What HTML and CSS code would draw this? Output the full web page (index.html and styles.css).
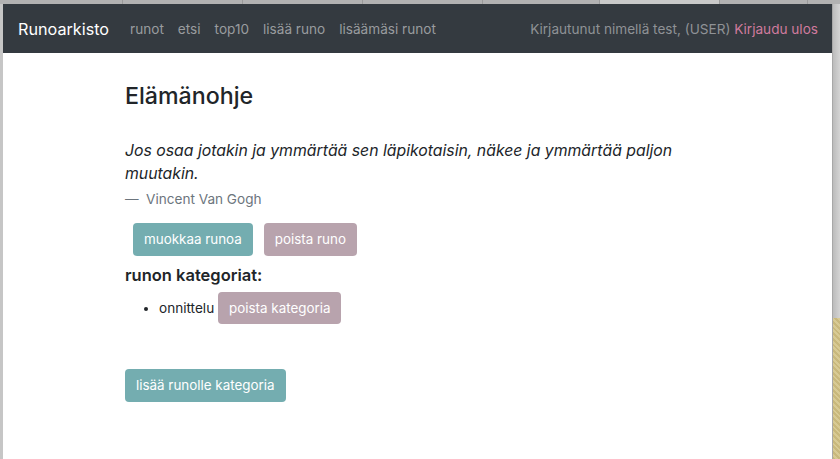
FILE: index.html
```html
<!DOCTYPE html>
<html lang="fi">
<head>
<meta charset="utf-8">
<title>Runoarkisto</title>
<link rel="stylesheet" href="styles.css">
</head>
<body>
<div class="tabs">
  <div class="tab t1"></div><div class="tab t2"></div><div class="tab t3"></div><div class="tab t4"></div><div class="tab t5"></div><div class="tab t6 active"></div><div class="tab t7"></div><div class="tab t8"></div>
</div>
<div class="window">
  <div class="edge-left"></div>
  <div class="page">
    <nav class="navbar">
      <a class="brand" href="#">Runoarkisto</a>
      <ul class="nav-links">
        <li><a href="#">runot</a></li>
        <li><a href="#">etsi</a></li>
        <li><a href="#">top10</a></li>
        <li><a href="#">lisää runo</a></li>
        <li><a href="#">lisäämäsi runot</a></li>
      </ul>
      <div class="user">Kirjautunut nimellä test, (USER) <a class="logout" href="#">Kirjaudu ulos</a></div>
    </nav>
    <main class="content">
      <h3 class="title">Elämänohje</h3>
      <blockquote class="quote">
        <p class="quote-text">Jos osaa jotakin ja ymmärtää sen läpikotaisin, näkee ja ymmärtää paljon muutakin.</p>
        <footer class="quote-author"><span class="dash">—</span>Vincent Van Gogh</footer>
      </blockquote>
      <div class="actions">
        <button class="btn btn-teal">muokkaa runoa</button>
        <button class="btn btn-mauve">poista runo</button>
      </div>
      <h5 class="subtitle">runon kategoriat:</h5>
      <ul class="cats">
        <li><span class="cat-name">onnittelu</span> <button class="btn btn-mauve">poista kategoria</button></li>
      </ul>
      <button class="btn btn-teal add">lisää runolle kategoria</button>
    </main>
  </div>
  <div class="edge-right"><div class="edge-grey"></div><div class="edge-gold"></div></div>
</div>
</body>
</html>
```

FILE: styles.css
```css
* { box-sizing: border-box; }
html, body { margin: 0; padding: 0; height: 100%; overflow: hidden; }
body {
  font-family: "Inter", "Noto Sans", sans-serif;
  color: #212529;
  background: #fff;
  display: flex;
  flex-direction: column;
}
.tabs {
  height: 4px;
  display: flex;
  background: #b2b2b2;
  flex: none;
}
.tab { height: 4px; border-right: 1px solid #9a9a9a; flex: none; }
.t1 { width: 123px; }
.t2, .t3, .t4, .t6 { width: 120px; }
.t5 { width: 117px; }
.t7 { width: 88px; }
.t8 { width: 32px; border-right: none; }
.tab.active { background: #c9c9c9; }

.window { flex: 1; display: flex; min-height: 0; }
.edge-left { width: 3px; background: #c6c6c6; flex: none; }
.edge-right { width: 8px; flex: none; display: flex; flex-direction: column; border-left: 1px solid #a8a8a8; }
.edge-grey { height: 314px; background: linear-gradient(to right, #bcbcbc, #d4d4d4); }
.edge-gold { flex: 1; background: repeating-linear-gradient(45deg, #c9b87c 0 2px, #d8ca94 2px 4px); }
.page { flex: 1; display: flex; flex-direction: column; }

.navbar {
  height: 49px;
  background: #343a40;
  display: flex;
  align-items: center;
  padding: 0 14px 0 15px;
  flex: none;
}
.brand {
  color: #fff;
  text-decoration: none;
  font-size: 16.2px;
  margin-right: 14px;
}
.nav-links { list-style: none; display: flex; margin: 0; padding: 0; }
.nav-links a {
  display: block;
  padding: 0 7px;
  color: #999c9f;
  text-decoration: none;
  font-size: 13.6px;
}
.user { margin-left: auto; color: #8f9296; font-size: 13.6px; }
.logout { color: #d07a9e; text-decoration: none; }

.content { padding: 30px 0 0 122px; width: 720px; }
.title { font-size: 23.2px; font-weight: 500; margin: 0 0 28px; line-height: 1.2; }
.quote { margin: 0 0 16px; }
.quote-text { font-style: italic; font-size: 15.8px; line-height: 23px; margin: 0; }
.quote-author { color: #6c757d; font-size: 13.6px; margin-top: 6px; display: flex; }
.dash { width: 21px; flex: none; }

.actions { display: flex; gap: 11px; margin-left: 8px; }
.btn {
  font-family: inherit;
  font-size: 13.4px;
  color: #fff;
  border: none;
  border-radius: 4px;
  padding: 0 11px;
  height: 33px;
  line-height: 33px;
}
.btn-teal { background: #74adb0; }
.btn-mauve { background: #b8a3ad; }
.subtitle { font-size: 16.5px; font-weight: 600; margin: 9px 0 7px; }
.cats { margin: 0 0 45px; padding-left: 34px; font-size: 13.6px; }
.cats .btn { height: 32px; line-height: 32px; }
.add { display: block; }
```
